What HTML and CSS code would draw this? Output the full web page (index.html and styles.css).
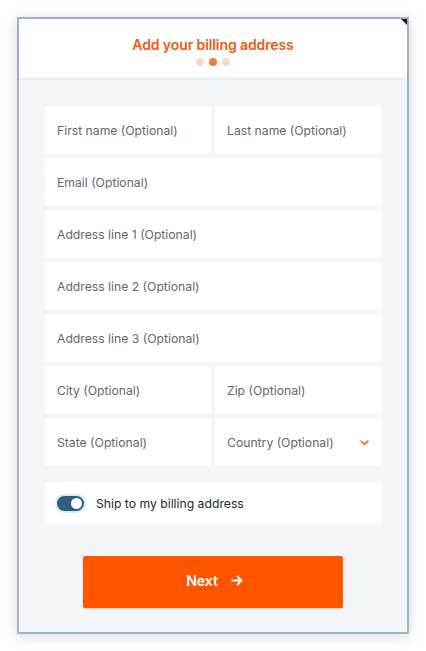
FILE: index.html
```html
<!DOCTYPE html>
<html lang="en">
<head>
<meta charset="utf-8">
<title>Billing address</title>
<link rel="stylesheet" href="styles.css">
</head>
<body>
<div class="frame">
  <header class="header">
    <h1 class="title">Add your billing address</h1>
    <div class="dots"><span class="dot"></span><span class="dot active"></span><span class="dot"></span></div>
    <span class="corner"></span>
  </header>
  <main class="body">
    <div class="grid">
      <div class="field">First name (Optional)</div>
      <div class="field">Last name (Optional)</div>
      <div class="field wide">Email (Optional)</div>
      <div class="field wide">Address line 1 (Optional)</div>
      <div class="field wide">Address line 2 (Optional)</div>
      <div class="field wide">Address line 3 (Optional)</div>
      <div class="field">City (Optional)</div>
      <div class="field">Zip (Optional)</div>
      <div class="field">State (Optional)</div>
      <div class="field select">Country (Optional)
        <svg class="chev" width="9" height="6" viewBox="0 0 9 6"><path d="M1 1l3.5 3.5L8 1" fill="none" stroke="#f0661f" stroke-width="1.6" stroke-linecap="round" stroke-linejoin="round"/></svg>
      </div>
    </div>
    <div class="ship">
      <span class="toggle"><span class="knob"></span></span>
      <span class="ship-label">Ship to my billing address</span>
    </div>
    <div class="actions">
      <button class="next">Next
        <svg width="12" height="11" viewBox="0 0 12 11"><path d="M1 5.5h9.5M6.5 1.5l4 4-4 4" fill="none" stroke="#fff" stroke-width="1.8" stroke-linecap="round" stroke-linejoin="round"/></svg>
      </button>
    </div>
  </main>
</div>
</body>
</html>
```

FILE: styles.css
```css
* { box-sizing: border-box; }
html, body { margin: 0; background: #ffffff; }
body {
  padding: 17px;
  font-family: Inter, "Noto Sans", sans-serif;
}
.frame {
  width: 392px;
  height: 617px;
  border: 2px solid #9db4c4;
  background: #f3f5f9;
  display: flex;
  flex-direction: column;
  box-shadow: 0 2px 14px rgba(90, 120, 140, 0.28);
}
.header {
  position: relative;
  height: 59px;
  background: #ffffff;
  display: flex;
  flex-direction: column;
  align-items: center;
  padding-top: 17px;
  box-shadow: 0 1px 2px rgba(20, 40, 60, 0.08);
}
.title {
  margin: 0;
  font-size: 14px;
  font-weight: 600;
  color: #ec5a12;
  line-height: 18px;
  letter-spacing: -0.1px;
}
.dots { display: flex; gap: 5px; margin-top: 4px; }
.dot { width: 8px; height: 8px; border-radius: 50%; background: #fbd7c6; }
.dot.active { background: #f07a45; }
.corner {
  position: absolute;
  top: 0;
  right: 0;
  width: 0;
  height: 0;
  border-top: 6px solid #1a1a1a;
  border-left: 6px solid transparent;
}
.body {
  flex: 1;
  padding: 28px 26px 0;
  display: flex;
  flex-direction: column;
}
.grid {
  display: grid;
  grid-template-columns: 1fr 1fr;
  grid-auto-rows: 48px;
  gap: 4px;
}
.field {
  background: #ffffff;
  border-radius: 2px;
  display: flex;
  align-items: center;
  padding: 0 12px;
  font-size: 12.2px;
  color: #5f6670;
}
.field.wide { grid-column: span 2; }
.field.select { justify-content: space-between; padding-right: 12px; }
.chev { margin-top: 1px; }
.ship {
  margin-top: 16px;
  height: 42px;
  background: #ffffff;
  border-radius: 2px;
  display: flex;
  align-items: center;
  padding-left: 12px;
  gap: 12px;
}
.toggle {
  width: 27px;
  height: 15px;
  border-radius: 8px;
  background: #2e5f7d;
  box-shadow: 0 0 0 2px #d6eaf6;
  display: flex;
  justify-content: flex-end;
  align-items: center;
  padding: 2px;
}
.knob { width: 11px; height: 11px; border-radius: 50%; background: #ffffff; }
.ship-label { font-size: 12.2px; color: #222831; }
.actions { display: flex; justify-content: center; margin-top: 32px; }
.next {
  width: 260px;
  height: 52px;
  border: none;
  border-radius: 2px;
  background: #ff5400;
  color: #ffffff;
  font-family: inherit;
  font-size: 14px;
  font-weight: 600;
  display: flex;
  align-items: center;
  justify-content: center;
  gap: 13px;
  box-shadow: 0 1px 2px rgba(0, 0, 0, 0.15);
  padding: 0 0 3px 3px;
}
```
